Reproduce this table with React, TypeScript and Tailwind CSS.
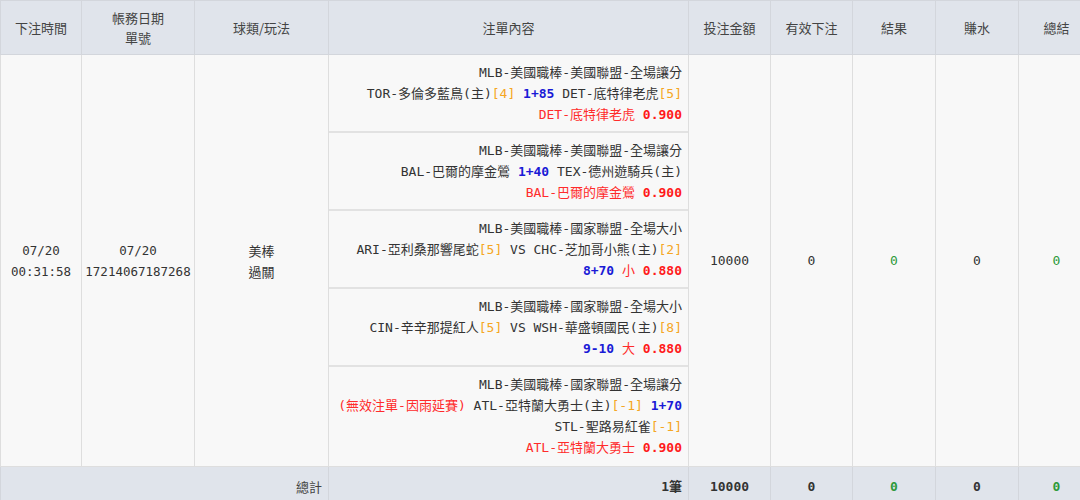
import React from "react";

const O = ({ children }: { children: React.ReactNode }) => (
  <span className="text-[#f5a623]">{children}</span>
);
const B = ({ children }: { children: React.ReactNode }) => (
  <span className="font-bold text-[#1a1ad6]">{children}</span>
);
const R = ({ children }: { children: React.ReactNode }) => (
  <span className="text-[#ff2b2b]">{children}</span>
);
const RB = ({ children }: { children: React.ReactNode }) => (
  <span className="font-bold text-[#ff1a1a]">{children}</span>
);

const bets: React.ReactNode[][] = [
  [
    <>MLB-美國職棒-美國聯盟-全場讓分</>,
    <>TOR-多倫多藍鳥(主)<O>[4]</O> <B>1+85</B> DET-底特律老虎<O>[5]</O></>,
    <><R>DET-底特律老虎</R> <RB>0.900</RB></>,
  ],
  [
    <>MLB-美國職棒-美國聯盟-全場讓分</>,
    <>BAL-巴爾的摩金鶯 <B>1+40</B> TEX-德州遊騎兵(主)</>,
    <><R>BAL-巴爾的摩金鶯</R> <RB>0.900</RB></>,
  ],
  [
    <>MLB-美國職棒-國家聯盟-全場大小</>,
    <>ARI-亞利桑那響尾蛇<O>[5]</O> VS CHC-芝加哥小熊(主)<O>[2]</O></>,
    <><B>8+70</B> <R>小</R> <RB>0.880</RB></>,
  ],
  [
    <>MLB-美國職棒-國家聯盟-全場大小</>,
    <>CIN-辛辛那提紅人<O>[5]</O> VS WSH-華盛頓國民(主)<O>[8]</O></>,
    <><B>9-10</B> <R>大</R> <RB>0.880</RB></>,
  ],
  [
    <>MLB-美國職棒-國家聯盟-全場讓分</>,
    <><R>(無效注單-因雨延賽)</R> ATL-亞特蘭大勇士(主)<O>[-1]</O> <B>1+70</B></>,
    <>STL-聖路易紅雀<O>[-1]</O></>,
    <><R>ATL-亞特蘭大勇士</R> <RB>0.900</RB></>,
  ],
];

const thCls =
  "border border-[#d3d6dc] font-normal text-[13px] leading-[20px] text-[#444] text-center align-middle font-['Noto_Sans_CJK_TC','Noto_Sans',sans-serif]";

const bodyCell = "border border-[#dedede] text-center align-middle";
const footCell = "border border-[#d3d6dc] text-center align-middle";

export default function App() {
  return (
    <div className="w-[1080px] h-[500px] overflow-hidden bg-white">
      <table className="w-[1094px] border-collapse table-fixed text-[13px] text-[#333] font-['DejaVu_Sans_Mono','Noto_Sans_CJK_TC',monospace]">
        <thead>
          <tr className="h-[54px] bg-[#e0e4eb]">
            <th className={`${thCls} w-[81px]`}>下注時間</th>
            <th className={`${thCls} w-[113px]`}>
              帳務日期
              <br />
              單號
            </th>
            <th className={`${thCls} w-[134px]`}>球類/玩法</th>
            <th className={`${thCls} w-[360px]`}>注單內容</th>
            <th className={`${thCls} w-[82px]`}>投注金額</th>
            <th className={`${thCls} w-[82px]`}>有效下注</th>
            <th className={`${thCls} w-[83px]`}>結果</th>
            <th className={`${thCls} w-[83px]`}>賺水</th>
            <th className={`${thCls} w-[76px]`}>總結</th>
          </tr>
        </thead>
        <tbody>
          <tr className="bg-[#f8f8f8] h-[412px]">
            <td className={`${bodyCell} leading-[21px] text-[12.5px]`}>
              07/20
              <br />
              00:31:58
            </td>
            <td className={`${bodyCell} leading-[21px] text-[12.5px]`}>
              07/20
              <br />
              17214067187268
            </td>
            <td className={`${bodyCell} leading-[21px] font-['Noto_Sans_CJK_TC',sans-serif]`}>
              美棒
              <br />
              過關
            </td>
            <td className="border border-[#dedede] p-0 align-top">
              <div className="flex flex-col">
                {bets.map((lines, i) => (
                  <div
                    key={i}
                    className={
                      i < bets.length - 1
                        ? "flex flex-col items-end pr-[6px] pt-[7px] pb-[6px] leading-[21px] whitespace-nowrap border-b-2 border-[#e2e2e2]"
                        : "flex flex-col items-end pr-[6px] pt-[7px] pb-[6px] leading-[21px] whitespace-nowrap"
                    }
                  >
                    {lines.map((l, j) => (
                      <div key={j}>{l}</div>
                    ))}
                  </div>
                ))}
              </div>
            </td>
            <td className={bodyCell}>10000</td>
            <td className={bodyCell}>0</td>
            <td className={`${bodyCell} text-[#2e9a3a]`}>0</td>
            <td className={bodyCell}>0</td>
            <td className={`${bodyCell} text-[#2e9a3a]`}>0</td>
          </tr>
          <tr className="h-[40px] bg-[#e0e4eb] font-bold">
            <td
              colSpan={3}
              className="border border-[#d3d6dc] text-right pr-[6px] align-middle font-normal text-[#444] font-['Noto_Sans_CJK_TC',sans-serif]"
            >
              總計
            </td>
            <td className="border border-[#d3d6dc] text-right pr-[6px] align-middle">1筆</td>
            <td className={footCell}>10000</td>
            <td className={footCell}>0</td>
            <td className={`${footCell} text-[#2e9a3a]`}>0</td>
            <td className={footCell}>0</td>
            <td className={`${footCell} text-[#2e9a3a]`}>0</td>
          </tr>
        </tbody>
      </table>
    </div>
  );
}
